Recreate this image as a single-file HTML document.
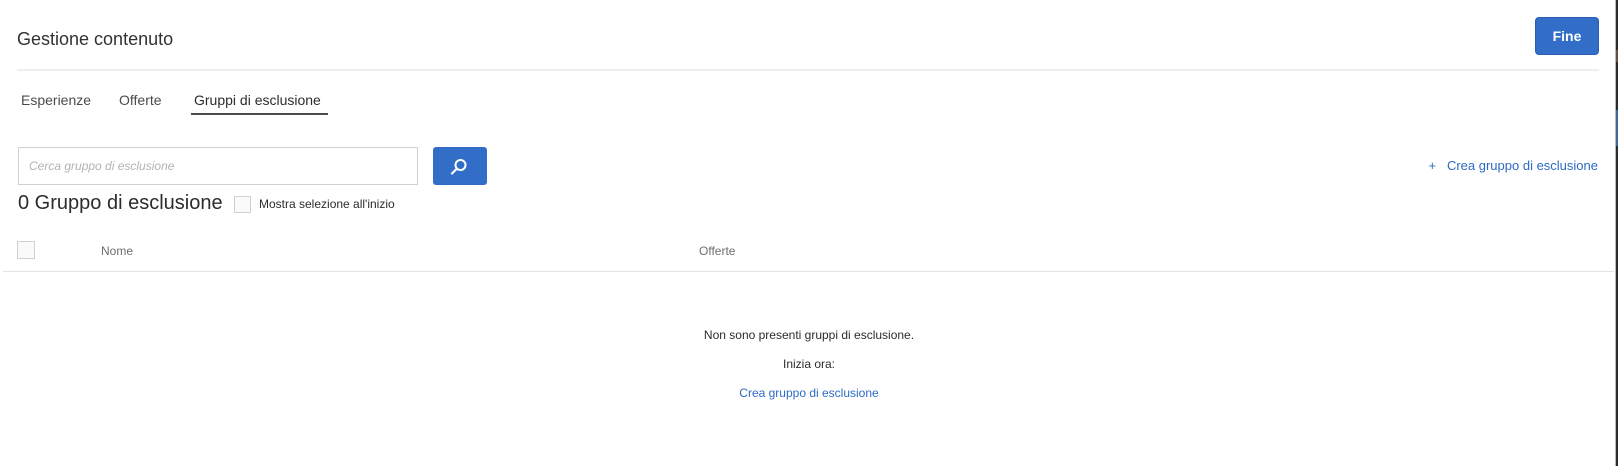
<!DOCTYPE html>
<html><head><meta charset="utf-8"><style>
*{margin:0;padding:0;box-sizing:border-box}
body{width:1618px;height:466px;background:#fff;font-family:"Liberation Sans",sans-serif;position:relative;overflow:hidden;color:#2c2c2c}
.a{position:absolute;white-space:nowrap}
</style></head><body>
<div class="a" style="left:1615px;top:0;width:1px;height:466px;background:#b8b8b8"></div>
<div class="a" style="left:1616px;top:0;width:2px;height:466px;background:#2a2a2a"></div>
<div class="a" style="left:1616px;top:50px;width:2px;height:12px;background:#6b4f3e"></div>
<div class="a" style="left:1616px;top:110px;width:2px;height:36px;background:#3b6a9a"></div>
<div class="a" style="left:17px;top:29px;font-size:18px;color:#323232">Gestione contenuto</div>
<div class="a" style="left:1535px;top:17px;width:64px;height:38px;background:#326ec8;border:1px solid #2a5eb0;border-radius:4px;color:#fff;font-weight:bold;font-size:14px;text-align:center;line-height:36px">Fine</div>
<div class="a" style="left:17px;top:69px;width:1582px;height:2px;background:#eeeeee"></div>
<div class="a" style="left:21px;top:92px;font-size:14px;color:#4b4b4b">Esperienze</div>
<div class="a" style="left:119px;top:92px;font-size:14px;color:#4b4b4b">Offerte</div>
<div class="a" style="left:194px;top:92px;font-size:14px;color:#2c2c2c">Gruppi di esclusione</div>
<div class="a" style="left:191px;top:113px;width:137px;height:2px;background:#4b4b4b"></div>
<div class="a" style="left:18px;top:147px;width:400px;height:38px;border:1px solid #d0d0d0;background:#fff"></div>
<div class="a" style="left:29px;top:159px;font-size:12px;font-style:italic;color:#b3b3b3">Cerca gruppo di esclusione</div>
<div class="a" style="left:433px;top:147px;width:54px;height:38px;background:#326ec8;border-radius:3px"></div>
<svg class="a" style="left:449px;top:157px" width="20" height="20" viewBox="0 0 20 20"><circle cx="11.5" cy="8" r="5" fill="none" stroke="#fff" stroke-width="2"/><line x1="8" y1="11.5" x2="3" y2="16.5" stroke="#fff" stroke-width="2.2" stroke-linecap="round"/></svg>
<div class="a" style="right:20px;top:158px;font-size:13px;color:#2d6ac4">+&nbsp;&nbsp;&nbsp;Crea gruppo di esclusione</div>
<div class="a" style="left:18px;top:192px;font-size:20px;color:#2c2c2c">0 Gruppo di esclusione</div>
<div class="a" style="left:234px;top:196px;width:17px;height:17px;border:1px solid #d0d0d0;background:#fafafa"></div>
<div class="a" style="left:259px;top:197px;font-size:12px;color:#2c2c2c">Mostra selezione all'inizio</div>
<div class="a" style="left:17px;top:241px;width:18px;height:18px;border:1px solid #d0d0d0;background:#fafafa"></div>
<div class="a" style="left:101px;top:244px;font-size:12px;color:#6e6e6e">Nome</div>
<div class="a" style="left:699px;top:244px;font-size:12px;color:#6e6e6e">Offerte</div>
<div class="a" style="left:3px;top:271px;width:1611px;height:1px;background:#e4e4e4"></div>
<div class="a" style="left:0;top:328px;width:1618px;text-align:center;font-size:12px;color:#2c2c2c">Non sono presenti gruppi di esclusione.</div>
<div class="a" style="left:0;top:357px;width:1618px;text-align:center;font-size:12px;color:#2c2c2c">Inizia ora:</div>
<div class="a" style="left:0;top:386px;width:1618px;text-align:center;font-size:12px;color:#2d6ac4">Crea gruppo di esclusione</div>
</body></html>
